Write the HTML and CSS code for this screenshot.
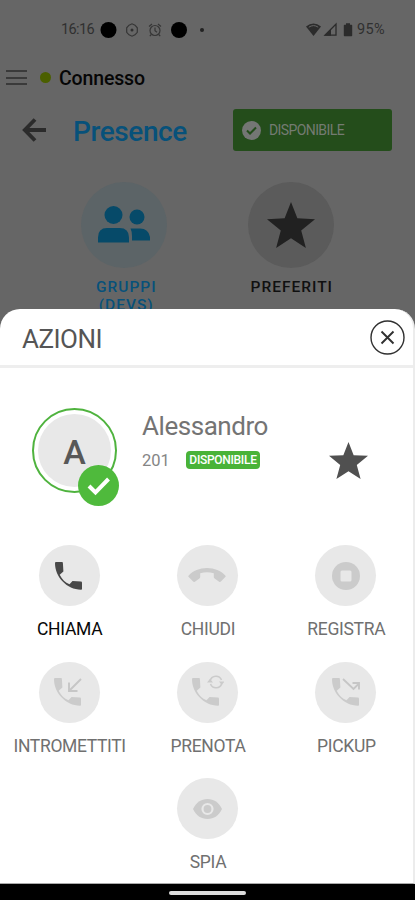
FILE: index.html
```html
<!DOCTYPE html>
<html lang="it">
<head>
<meta charset="utf-8">
<title>Presence</title>
<link rel="stylesheet" href="styles.css">
</head>
<body>
<svg width="0" height="0" class="defs">
  <defs>
    <path id="phone" d="M1.200 0h5.600c.7 0 1 .4 1.100 1l.5 8.500-3.700 3.200c2.500 5 5.500 7.800 9.800 9.600l3-3.200 8.500.5c.6.1 1 .5 1 1.100v6c0 .7-.5 1-1 1C12 27.500 0 15 0 1.200 0 .5.500 0 1.200 0z"/>
    <path id="star" d="M20 0l5.300 13.500L40 14.200 28.500 23.500 32.400 38 20 30 7.600 38 11.500 23.500 0 14.200l14.700-.7z"/>
  </defs>
</svg>
<div class="screen">
  <div class="backdrop">
    <div class="status">
      <span class="time">16:16</span>
      <svg class="notif" width="112" height="18" viewBox="0 0 112 18">
        <circle cx="8.500" cy="9" r="8"/>
        <g fill="none" stroke="#363636" stroke-width="1.200">
          <path d="M29 4.200l3-1.400 3 1.400 2.300 2.600v4.500L35 13.800l-3 1.400-3-1.400-2.300-2.500V6.800z"/>
          <circle cx="55" cy="9.500" r="5"/>
          <path d="M49 5.500l3-2.500M61 5.500L58 3M51.300 13.500l-1.500 1.700M58.700 13.500l1.500 1.700M55 6.500v3.300l2 1.500"/>
        </g>
        <circle cx="32" cy="9" r="1.500" fill="#303030"/>
        <circle cx="79" cy="9" r="8"/>
        <circle cx="102" cy="9" r="2" fill="#222"/>
      </svg>
      <svg class="signals" width="48" height="16" viewBox="0 0 48 16">
        <path d="M0 4.500Q7.500-1.500 15 4.500L7.500 14z" fill="#2b2b2b"/>
        <path d="M2.800 5.200Q7.500 2 12.200 5.200" fill="none" stroke="#666" stroke-width="1"/>
        <path d="M19 13.200L30 2v11.200z" fill="none" stroke="#2b2b2b" stroke-width="1.300"/>
        <path d="M18 13.800l7-7v7z" fill="#2b2b2b"/>
        <path d="M38.500 2.800h1.500V1.200h4v1.600h1.500q.7 0 .7.700v10q0 .7-.7.700h-7q-.7 0-.7-.7v-10q0-.7.700-.7z" fill="#2b2b2b"/>
      </svg>
      <span class="percent">95%</span>
    </div>
    <div class="connection">
      <span class="menu"><i></i><i></i><i></i></span>
      <span class="online"></span>
      <span class="state">Connesso</span>
    </div>
    <div class="titlebar">
      <svg width="25" height="24" viewBox="0 0 25 24" fill="none" stroke="#2b2b2b" stroke-width="3.800"><path d="M24 12H3M13 1.500L2.800 12 13 22.500"/></svg>
      <h1>Presence</h1>
      <div class="status-button">
        <svg width="19" height="19" viewBox="0 0 19 19"><circle cx="9.500" cy="9.500" r="9.500" fill="#747674"/><path d="M5 9.500l3 3L14 6.500" fill="none" stroke="#244d1b" stroke-width="2"/></svg>
        <span>DISPONIBILE</span>
      </div>
    </div>
    <div class="tabs">
      <div class="tab active">
        <div class="disc"><svg width="52" height="38" viewBox="0 0 52 38" fill="#064a69"><circle cx="15.500" cy="9" r="9"/><path d="M0 36.500v-5Q0 22 9 22h12.500Q31 22 31 31.500v5z"/><circle cx="39" cy="11" r="7.500"/><path d="M32.500 22.500H42q8.500 0 10 8.500v3.500H34v-4.500q0-4.500-1.500-7.500z"/></svg></div>
        <span class="name">GRUPPI<br>(DEVS)</span>
      </div>
      <div class="tab">
        <div class="disc"><svg width="48" height="46" viewBox="0 0 40 38" preserveAspectRatio="none" fill="#212121"><use href="#star"/></svg></div>
        <span class="name">PREFERITI</span>
      </div>
    </div>
  </div>
  <div class="sheet">
    <div class="sheet-head">
      <h2>AZIONI</h2>
      <svg width="35" height="35" viewBox="0 0 35 35" fill="none" stroke="#303030"><circle cx="17.500" cy="17.500" r="16.500" stroke-width="1.400"/><path d="M11.500 11.500l12 12M23.500 11.500l-12 12" stroke-width="1.900"/></svg>
    </div>
    <div class="contact">
      <div class="avatar"><span class="initial">A</span>
        <svg class="check" width="41" height="41" viewBox="0 0 41 41"><circle cx="20.500" cy="20.500" r="20.500" fill="#4fba3c"/><path d="M11 21l6.500 6.500L30.500 14" fill="none" stroke="#fff" stroke-width="4"/></svg>
      </div>
      <div class="info">
        <div class="person">Alessandro</div>
        <div class="detail"><span class="ext">201</span><span class="pill">DISPONIBILE</span></div>
      </div>
      <svg class="fav" width="39" height="37" viewBox="0 0 40 38" preserveAspectRatio="none" fill="#505050"><use href="#star"/></svg>
    </div>
    <div class="actions">
      <div class="action enabled"><div class="round"><svg width="28" height="28" viewBox="0 0 28 28"><use href="#phone"/></svg></div><span>CHIAMA</span></div>
      <div class="action"><div class="round"><svg width="38" height="16" viewBox="0 0 38 16"><path d="M19 0C11.500 0 5 2.800.7 7.400q-.8.900 0 1.700l4.400 4.500q.8.800 1.800.1l4.500-3.200q.8-.6.800-1.500V5.200Q19 3.200 25.800 5.200V9q0 .9.800 1.500l4.500 3.200q1 .7 1.800-.1l4.400-4.500q.8-.8 0-1.700C33 2.800 26.500 0 19 0z"/></svg></div><span>CHIUDI</span></div>
      <div class="action"><div class="round"><svg width="28" height="28" viewBox="0 0 28 28"><circle cx="14" cy="14" r="14"/><rect x="8.500" y="8.500" width="11" height="11" rx="1.500" fill="#e8e8e8"/></svg></div><span>REGISTRA</span></div>
      <div class="action"><div class="round"><svg class="incoming" width="28" height="28" viewBox="0 0 28 28"><use href="#phone"/><path d="M27 1L15.500 12.500M15 4.500V13h8.500" fill="none" stroke="#c6c6c6" stroke-width="1.900"/></svg></div><span class="wide">INTROMETTITI</span></div>
      <div class="action"><div class="round"><svg class="booking" width="32" height="31" viewBox="0 0 32 31"><use href="#phone" y="3"/><g fill="none" stroke="#cbcbcb" stroke-width="1.600"><path d="M18.200 5.500A6 6 0 0 1 29.500 5M29.800 8.500A6 6 0 0 1 18.500 9"/></g><path d="M15 7.500h6L18 3.800zM27 6.500h5.500L29.700 10z"/></svg></div><span>PRENOTA</span></div>
      <div class="action"><div class="round"><svg width="28" height="28" viewBox="0 0 28 28"><use href="#phone"/><path d="M11 1l10.500 10 5.500-5.500M20.500 5H27v6.500" fill="none" stroke="#c6c6c6" stroke-width="1.900"/></svg></div><span>PICKUP</span></div>
      <div class="action last"><div class="round"><svg width="29" height="20" viewBox="0 0 29 20"><path d="M0 10C3 3.500 8 0 14.500 0S26 3.500 29 10c-3 6.500-8 10-14.500 10S3 16.500 0 10z"/><circle cx="14.500" cy="10" r="5" fill="none" stroke="#e8e8e8" stroke-width="2.200"/></svg></div><span>SPIA</span></div>
    </div>
  </div>
  <div class="navbar"><i></i></div>
</div>
</body>
</html>
```
FILE: styles.css
```css
* { box-sizing: border-box; }
body { margin: 0; font-family: Roboto, "Liberation Sans", sans-serif; }
svg { display: block; flex: none; }
.defs { position: absolute; }
.screen { width: 415px; height: 900px; display: flex; flex-direction: column; overflow: hidden; background: #666; }
.backdrop { height: 309px; flex: none; }
.status { height: 59px; padding-left: 61px; display: flex; align-items: center; color: #303030; font-size: 14.500px; }
.time { width: 39px; white-space: nowrap; letter-spacing: -.6px; }
.signals { margin-left: 94px; }
.percent { margin-left: 3px; letter-spacing: .3px; }
.connection { height: 37px; display: flex; align-items: center; padding-left: 6px; }
.menu { width: 21px; height: 15px; display: flex; flex-direction: column; justify-content: space-between; }
.menu i { height: 2px; background: #3a3a3a; }
.online { width: 11px; height: 11px; border-radius: 50%; background: #4b5f00; margin-left: 13px; }
.state { margin: 1px 0 0 8px; font-size: 19.500px; font-weight: 500; color: #060606; white-space: nowrap; letter-spacing: -.15px; }
.titlebar { height: 68px; display: flex; align-items: center; padding-left: 22px; }
h1 { margin: 4px 0 0 26px; width: 160px; font-size: 28px; font-weight: 500; line-height: 34px; letter-spacing: -.4px; color: #07517a; }
.status-button { width: 159px; height: 42px; border-radius: 3px; background: #244d1b; display: flex; align-items: center; padding-left: 9px; color: #747b72; font-size: 14px; }
.status-button span { margin-left: 8px; letter-spacing: -.6px; }
.tabs { display: flex; padding: 18px 0 0 41px; }
.tab { width: 166.500px; display: flex; flex-direction: column; align-items: center; }
.disc { width: 86px; height: 86px; border-radius: 50%; background: #5b5b5b; display: flex; align-items: center; justify-content: center; }
.active .disc { background: #5c6467; }
.name { margin: 10px 0 0 2px; font-size: 15.500px; line-height: 18px; font-weight: 500; letter-spacing: 1px; text-align: center; color: #101010; }
.active .name { color: #07517a; margin-left: 4px; }
.sheet { height: 575px; flex: none; background: #fff; border-radius: 20px 20px 0 0; border-right: 2px solid #ececec; border-bottom: 1px solid #aaa; }
.sheet-head { height: 59px; border-bottom: 3px solid #eee; display: flex; align-items: center; justify-content: space-between; padding: 0 8px 0 22px; }
h2 { margin: 4px 0 0; font-size: 26px; font-weight: 400; color: #555; letter-spacing: -.5px; }
.contact { height: 177px; display: flex; padding: 40px 0 0 32px; }
.avatar { position: relative; width: 85px; height: 85px; border: 2px solid #4fb33e; border-radius: 50%; padding: 4px; }
.initial { height: 100%; border-radius: 50%; background: #e8e8e8; display: flex; align-items: center; justify-content: center; font-size: 34px; font-weight: 500; color: #585858; padding-top: 2px; }
.check { position: absolute; left: 44px; top: 55px; }
.info { width: 187px; padding-left: 25px; }
.person { margin-top: 1px; font-size: 26px; line-height: 34px; color: #747474; white-space: nowrap; letter-spacing: -.45px; }
.detail { display: flex; align-items: center; margin-top: 8px; height: 18px; }
.ext { width: 44px; padding-top: 1px; font-size: 16.500px; color: #858585; }
.pill { width: 74px; height: 18px; border-radius: 4px; background: #49b338; color: #fff; font-size: 12px; font-weight: 500; line-height: 18px; text-align: center; letter-spacing: -.3px; }
.fav { margin: 34px 0 0 25px; }
.actions { width: 415px; display: grid; grid-template-columns: repeat(3, 1fr); grid-auto-rows: 116.500px; }
.action { display: flex; flex-direction: column; align-items: center; color: #707070; fill: #cbcbcb; font-size: 17.500px; line-height: 24px; letter-spacing: -.3px; }
.action span { padding-left: 1px; }
.round { width: 61px; height: 61px; border-radius: 50%; background: #e8e8e8; display: flex; align-items: center; justify-content: center; margin-bottom: 11px; }
.enabled { color: #080808; fill: #484848; }
.wide { letter-spacing: -.35px; }
.incoming { margin-left: -3px; }
.booking { margin: -3px 0 0 1px; }
.last { grid-column: 2; }
.navbar { height: 16px; flex: none; background: #000; display: flex; justify-content: center; padding-top: 7px; }
.navbar i { width: 77px; height: 4px; border-radius: 2px; background: #ddd; }
```
